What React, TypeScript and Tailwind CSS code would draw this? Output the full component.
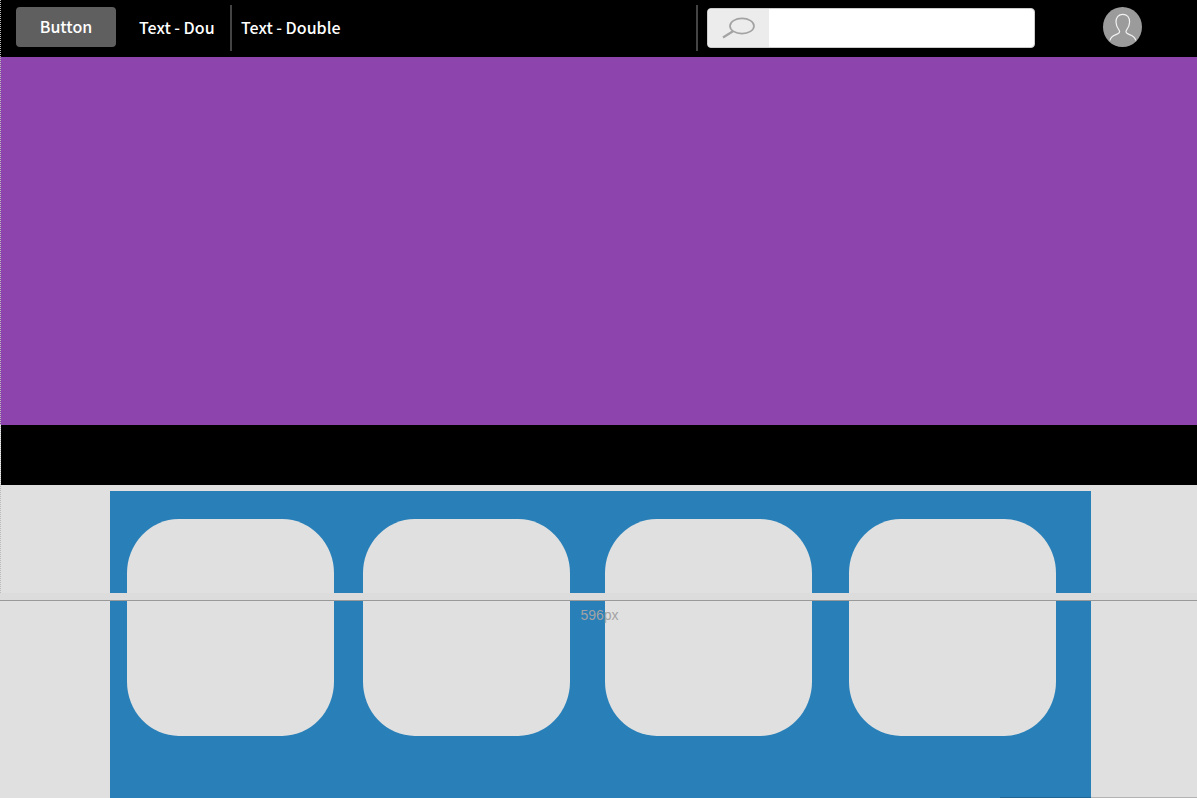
const cards = [
  { id: 1, margin: "" },
  { id: 2, margin: "ml-[29px]" },
  { id: 3, margin: "ml-[35px]" },
  { id: 4, margin: "ml-[37px]" },
];

function SearchIcon() {
  return (
    <svg width="34" height="24" viewBox="0 0 34 24" fill="none" stroke="#a3a3a3" aria-hidden="true">
      <ellipse cx="20" cy="10" rx="12" ry="7.6" strokeWidth="1.7" />
      <path d="M11 15.3 L1 21.5" strokeWidth="2.2" />
    </svg>
  );
}

function Avatar() {
  return (
    <svg width="39" height="40" viewBox="0 0 39 40" fill="none" aria-hidden="true">
      <ellipse cx="19.5" cy="20" rx="19.5" ry="20" fill="#9b9b9b" />
      <path
        d="M7 33.5 C7.5 29.5 10.5 28.6 13.5 27.4 C16.2 26.4 17.3 25.2 16.2 23.3 C14.3 21 13 18.5 13 15 C13 10.5 15.6 7.3 19.8 7.3 C24 7.3 26.6 10.5 26.6 15 C26.6 18.5 25.3 21 23.4 23.3 C22.3 25.2 23.4 26.4 26 27.4 C29 28.6 32 29.5 32.8 33.5"
        stroke="#f2f2f2"
        strokeWidth="1.2"
      />
    </svg>
  );
}

function Header() {
  return (
    <header className="flex h-[57px] items-start bg-black pl-4 text-base font-medium text-white">
      <button type="button" className="mt-[7px] h-10 w-[100px] rounded bg-[#5f5f5f] pb-[2px] leading-[38px]">
        Button
      </button>
      <nav className="flex pt-[5px] leading-[44px]">
        <a href="#first" className="ml-[23px] h-[46px] w-[91px] whitespace-nowrap">Text - Dou</a>
        <a href="#second" className="h-[46px] border-l-2 border-[#444] pl-[9px] whitespace-nowrap">Text - Double</a>
      </nav>
      <div className="mt-[5px] mr-[55px] ml-auto flex h-[46px] border-l-2 border-[#444] pl-[9px]">
        <label className="mt-[3px] flex h-10 w-[328px] overflow-hidden rounded border border-[#ccc] bg-white">
          <span className="flex w-[61px] shrink-0 items-center justify-center bg-[#ececec]">
            <SearchIcon />
          </span>
          <input type="search" aria-label="Search" className="min-w-0 flex-1 px-3 text-base text-black outline-none" />
        </label>
        <button type="button" aria-label="Account" className="mt-[2px] ml-[68px] h-10 w-[39px]">
          <Avatar />
        </button>
      </div>
    </header>
  );
}

export default function App() {
  return (
    <div className="relative flex min-h-screen flex-col overflow-hidden bg-[#e0e0e0] font-['Noto_Sans_CJK_SC','Noto_Sans',sans-serif]">
      <Header />
      <section className="h-[368px] bg-[#8e44ad]" />
      <section className="h-[60px] border-l border-[#eee] bg-black" />
      <main className="mt-[6px] mr-[106px] ml-[110px] flex flex-1 bg-[#2980b9] pt-7 pl-[17px]">
        {cards.map((card) => (
          <article key={card.id} className={`h-[217px] w-[207px] shrink-0 rounded-[25%] bg-[#e0e0e0] ${card.margin}`} />
        ))}
      </main>
      <div className="absolute top-0 left-0 h-[593px] border-l border-dotted border-[#bbb]" />
      <div className="absolute inset-x-0 top-[593px] h-2 border-b border-[#999] bg-[#dcdcdc]" />
      <div className="absolute inset-x-0 top-[606px] pl-[2px] text-center font-['Liberation_Sans',sans-serif] text-sm leading-[18px] text-[#a3a3a3]">
        596px
      </div>
      <div className="absolute right-0 bottom-0 h-px w-[197px] bg-black/20" />
    </div>
  );
}
